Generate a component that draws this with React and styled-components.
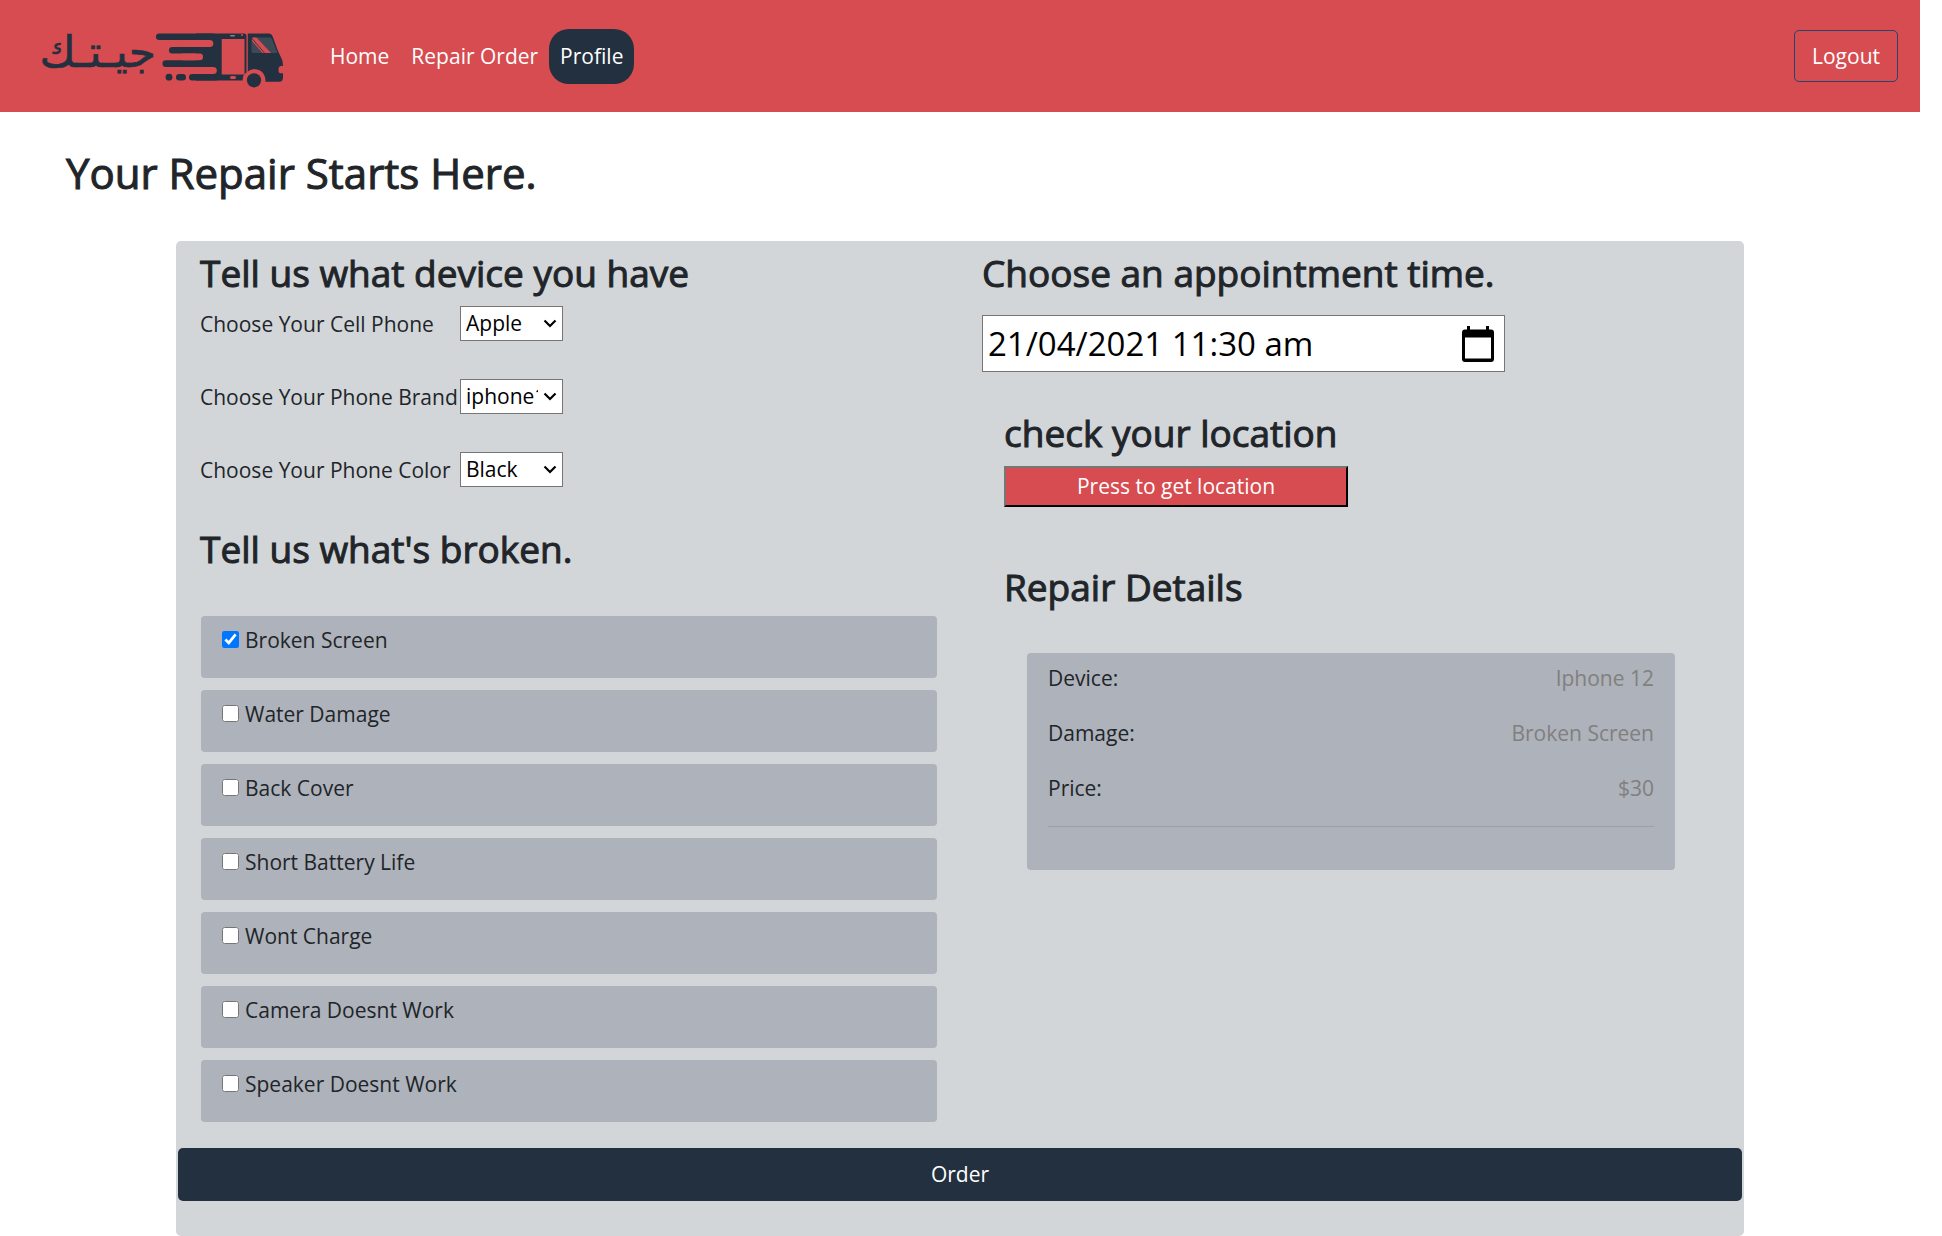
import React, { useState } from "react";
import styled, { createGlobalStyle } from "styled-components";

const color = {
  red: "#d64c50",
  navy: "#22303f",
  panel: "#d2d6d9",
  card: "#aeb2ba",
  text: "#212529",
  muted: "#808080",
};

const GlobalStyle = createGlobalStyle`
  *, *::before, *::after { box-sizing: border-box; }
  body {
    margin: 0;
    background: #fff;
    color: ${color.text};
    font-family: "Open Sans", "Noto Sans", sans-serif;
    font-size: 21px;
    line-height: 33px;
  }
  button, input, select { font: inherit; }
`;

const Page = styled.div`
  margin-right: 22px;
`;

const Navbar = styled.header`
  display: flex;
  align-items: center;
  height: 112px;
  padding: 0 22px 0 40px;
  background: ${color.red};
`;

const Brand = styled.a`
  display: block;
  height: 72px;
  margin-right: 29px;
`;

const Nav = styled.nav`
  display: flex;
  flex: 1;
`;

const NavLink = styled.a`
  padding: 11px;
  border-radius: 20px;
  background: ${(p) => (p.$active ? color.navy : "transparent")};
  color: #fff;
  text-decoration: none;
`;

const LogoutButton = styled.button`
  height: 52px;
  padding: 0 17px;
  border: 1px solid #24476b;
  border-radius: 5px;
  background: transparent;
  color: #fff;
`;

const PageTitle = styled.h1`
  margin: 32px 66px 39px;
  font-size: 42px;
  font-weight: 400;
  line-height: 58px;
  -webkit-text-stroke: 1px currentColor;
`;

const Panel = styled.form`
  margin: 0 176px;
  padding-bottom: 35px;
  border-radius: 5px;
  background: ${color.panel};
`;

const Columns = styled.div`
  display: grid;
  grid-template-columns: 1fr 1fr;
  margin-bottom: 26px;
`;

const DeviceColumn = styled.div`
  padding: 9px 23px 0 24px;
`;

const VisitColumn = styled.div`
  padding: 9px 22px 0;
`;

const Heading = styled.h2`
  margin: 0;
  font-size: 37px;
  font-weight: 400;
  line-height: 46px;
  -webkit-text-stroke: 1px currentColor;
`;

const Fields = styled.div`
  display: grid;
  gap: 38px;
  margin: 10px 0 39px;
`;

const Field = styled.div`
  display: grid;
  grid-template-columns: 260px 103px;
  align-items: center;

  label {
    padding-top: 2px;
  }
`;

const SelectBox = styled.span`
  position: relative;
  display: block;

  svg {
    position: absolute;
    top: 13px;
    right: 6px;
    pointer-events: none;
  }
`;

const Select = styled.select`
  display: block;
  width: 100%;
  height: 35px;
  padding: 0 24px 0 5px;
  border: 1px solid #767676;
  border-radius: 0;
  background: #fff;
  color: #000;
  appearance: none;
  text-overflow: clip;
`;

const IssueList = styled.div`
  display: grid;
  gap: 12px;
  margin: 44px 0 0 1px;
`;

const Issue = styled.label`
  display: flex;
  align-items: flex-start;
  gap: 6px;
  height: 62px;
  padding: 8px 21px;
  border-radius: 4px;
  background: ${color.card};
`;

const Checkbox = styled.input`
  width: 17px;
  height: 17px;
  margin: 7px 0 0;
`;

const DateBox = styled.div`
  display: flex;
  align-items: center;
  width: 523px;
  max-width: 100%;
  height: 57px;
  margin-top: 19px;
  padding: 0 10px 0 5px;
  border: 1px solid #767676;
  background: #fff;
`;

const DateInput = styled.input`
  flex: 1;
  min-width: 0;
  padding: 0;
  border: 0;
  background: transparent;
  color: #000;
  font-size: 33px;
  line-height: 44px;
`;

const CalendarButton = styled.button`
  display: flex;
  padding: 0;
  border: 0;
  background: none;
`;

const Section = styled.section`
  margin: 38px 22px 0;
`;

const LocationButton = styled.button`
  display: block;
  width: 344px;
  height: 41px;
  margin: 10px 0 57px;
  padding: 0;
  border: 2px outset #767676;
  border-color: #767676 #212121 #212121 #767676;
  background: ${color.red};
  color: #fff;
`;

const DetailsCard = styled.div`
  margin: 43px 25px 0 23px;
  padding: 9px 21px 43px;
  border-radius: 4px;
  background: ${color.card};
`;

const DetailList = styled.dl`
  display: grid;
  gap: 22px;
  margin: 0;
  padding-bottom: 21px;
  border-bottom: 1px solid #9da1a7;
`;

const Detail = styled.div`
  display: flex;
  justify-content: space-between;

  dd {
    margin: 0;
    color: ${color.muted};
  }
`;

const OrderButton = styled.button`
  display: block;
  width: calc(100% - 4px);
  height: 53px;
  margin: 0 2px;
  border: 0;
  border-radius: 5px;
  background: ${color.navy};
  color: #fff;
`;

function Logo() {
  return (
    <svg width="250" height="72" viewBox="40 20 250 72" role="img" aria-label="جيتك">
      <g fill={color.navy}>
        <text
          x="156"
          y="67"
          direction="rtl"
          fontFamily="DejaVu Sans, sans-serif"
          fontSize="44"
          stroke={color.navy}
          strokeWidth=".6"
        >
          جيـتـك
        </text>
        <rect x="156" y="33.5" width="60" height="6.5" rx="3.2" />
        <rect x="169" y="47" width="40" height="6.5" rx="3.2" />
        <rect x="162.5" y="60.2" width="45" height="6.8" rx="3.3" />
        <rect x="189" y="74" width="30" height="6.5" rx="3.2" />
        <rect x="176" y="74" width="10" height="6.5" rx="3.2" />
        <circle cx="169" cy="77.2" r="3.4" />
        <path d="M196 33.5H244Q246.5 33.5 246.5 36V72.5L243.5 75L242.5 80.5H196Z" />
      </g>
      <g fill={color.red}>
        <rect x="178" y="40" width="35.3" height="7" rx="3.5" />
        <rect x="180" y="53.5" width="23" height="6.7" rx="3.3" />
        <rect x="180" y="67" width="36.8" height="7" rx="3.5" />
        <rect x="221.7" y="39" width="22.8" height="35.5" />
        <rect x="230" y="76" width="6" height="3" rx="1.5" />
        <circle cx="242" cy="35" r="1" />
      </g>
      <rect x="230" y="35" width="5" height="1.6" rx=".8" fill="#7d8590" />
      <path
        d="M247.8 33.5H269Q271.5 33.5 272.5 36L278 51L282 59.5Q283 62 283 66H281Q278.5 66 278.5 69.7T281 73.3H283V77.5Q283 81.7 279 81.7H265.5Q265.5 70 254.5 69Q250.5 69 247.8 71.5Z"
        fill={color.navy}
      />
      <path d="M253 37.5H270Q271.5 37.5 272 39L277 51.5Q277.5 53 276 53H253Q251.5 53 251.5 51.5V39Q251.5 37.5 253 37.5Z" fill="#3d4957" />
      <path d="M252.5 37.5H256.5L271 53H262.5L252 41Z" fill={color.red} />
      <path d="M252 38.5L264.5 53" stroke={color.navy} strokeWidth=".8" />
      <circle cx="254" cy="80.3" r="7.1" fill={color.navy} />
    </svg>
  );
}

function Chevron() {
  return (
    <svg width="14" height="9" viewBox="0 0 14 9" aria-hidden="true">
      <path d="M1.5 1.5L7 7L12.5 1.5" fill="none" stroke="#000" strokeWidth="2.2" />
    </svg>
  );
}

function CalendarIcon() {
  return (
    <svg width="32" height="36" viewBox="0 0 32 36" aria-hidden="true">
      <path
        fillRule="evenodd"
        d="M5 0H8V3.5H24V0H27V3.5H29Q32 3.5 32 6.5V33Q32 36 29 36H3Q0 36 0 33V6.5Q0 3.5 3 3.5H5ZM3 11.5V32.5H29V11.5Z"
      />
    </svg>
  );
}

const fields = [
  { id: "phone", label: "Choose Your Cell Phone", options: ["Apple", "Samsung", "Huawei"] },
  { id: "brand", label: "Choose Your Phone Brand", options: ["iphone12", "iphone11"] },
  { id: "color", label: "Choose Your Phone Color", options: ["Black", "White"] },
];

const issues = [
  "Broken Screen",
  "Water Damage",
  "Back Cover",
  "Short Battery Life",
  "Wont Charge",
  "Camera Doesnt Work",
  "Speaker Doesnt Work",
];

const details = [
  ["Device:", "Iphone 12"],
  ["Damage:", "Broken Screen"],
  ["Price:", "$30"],
];

export default function App() {
  const [checked, setChecked] = useState(["Broken Screen"]);
  const toggle = (name) =>
    setChecked((list) =>
      list.includes(name) ? list.filter((item) => item !== name) : [...list, name]
    );

  return (
    <>
      <GlobalStyle />
      <Page>
        <Navbar>
          <Brand href="#"><Logo /></Brand>
          <Nav>
            <NavLink href="#home">Home</NavLink>
            <NavLink href="#order">Repair Order</NavLink>
            <NavLink href="#profile" $active>Profile</NavLink>
          </Nav>
          <LogoutButton type="button">Logout</LogoutButton>
        </Navbar>
        <main>
          <PageTitle>Your Repair Starts Here.</PageTitle>
          <Panel onSubmit={(e) => e.preventDefault()}>
            <Columns>
              <DeviceColumn>
                <Heading>Tell us what device you have</Heading>
                <Fields>
                  {fields.map((f) => (
                    <Field key={f.id}>
                      <label htmlFor={f.id}>{f.label}</label>
                      <SelectBox>
                        <Select id={f.id}>
                          {f.options.map((o) => <option key={o}>{o}</option>)}
                        </Select>
                        <Chevron />
                      </SelectBox>
                    </Field>
                  ))}
                </Fields>
                <Heading>Tell us what's broken.</Heading>
                <IssueList>
                  {issues.map((name) => (
                    <Issue key={name}>
                      <Checkbox
                        type="checkbox"
                        checked={checked.includes(name)}
                        onChange={() => toggle(name)}
                      />
                      {name}
                    </Issue>
                  ))}
                </IssueList>
              </DeviceColumn>
              <VisitColumn>
                <Heading as="label" htmlFor="time">Choose an appointment time.</Heading>
                <DateBox>
                  <DateInput id="time" type="text" defaultValue="21/04/2021 11:30 am" />
                  <CalendarButton type="button" aria-label="Open calendar">
                    <CalendarIcon />
                  </CalendarButton>
                </DateBox>
                <Section>
                  <Heading>check your location</Heading>
                  <LocationButton type="button">Press to get location</LocationButton>
                  <Heading>Repair Details</Heading>
                  <DetailsCard>
                    <DetailList>
                      {details.map(([term, value]) => (
                        <Detail key={term}>
                          <dt>{term}</dt>
                          <dd>{value}</dd>
                        </Detail>
                      ))}
                    </DetailList>
                  </DetailsCard>
                </Section>
              </VisitColumn>
            </Columns>
            <OrderButton type="submit">Order</OrderButton>
          </Panel>
        </main>
      </Page>
    </>
  );
}
